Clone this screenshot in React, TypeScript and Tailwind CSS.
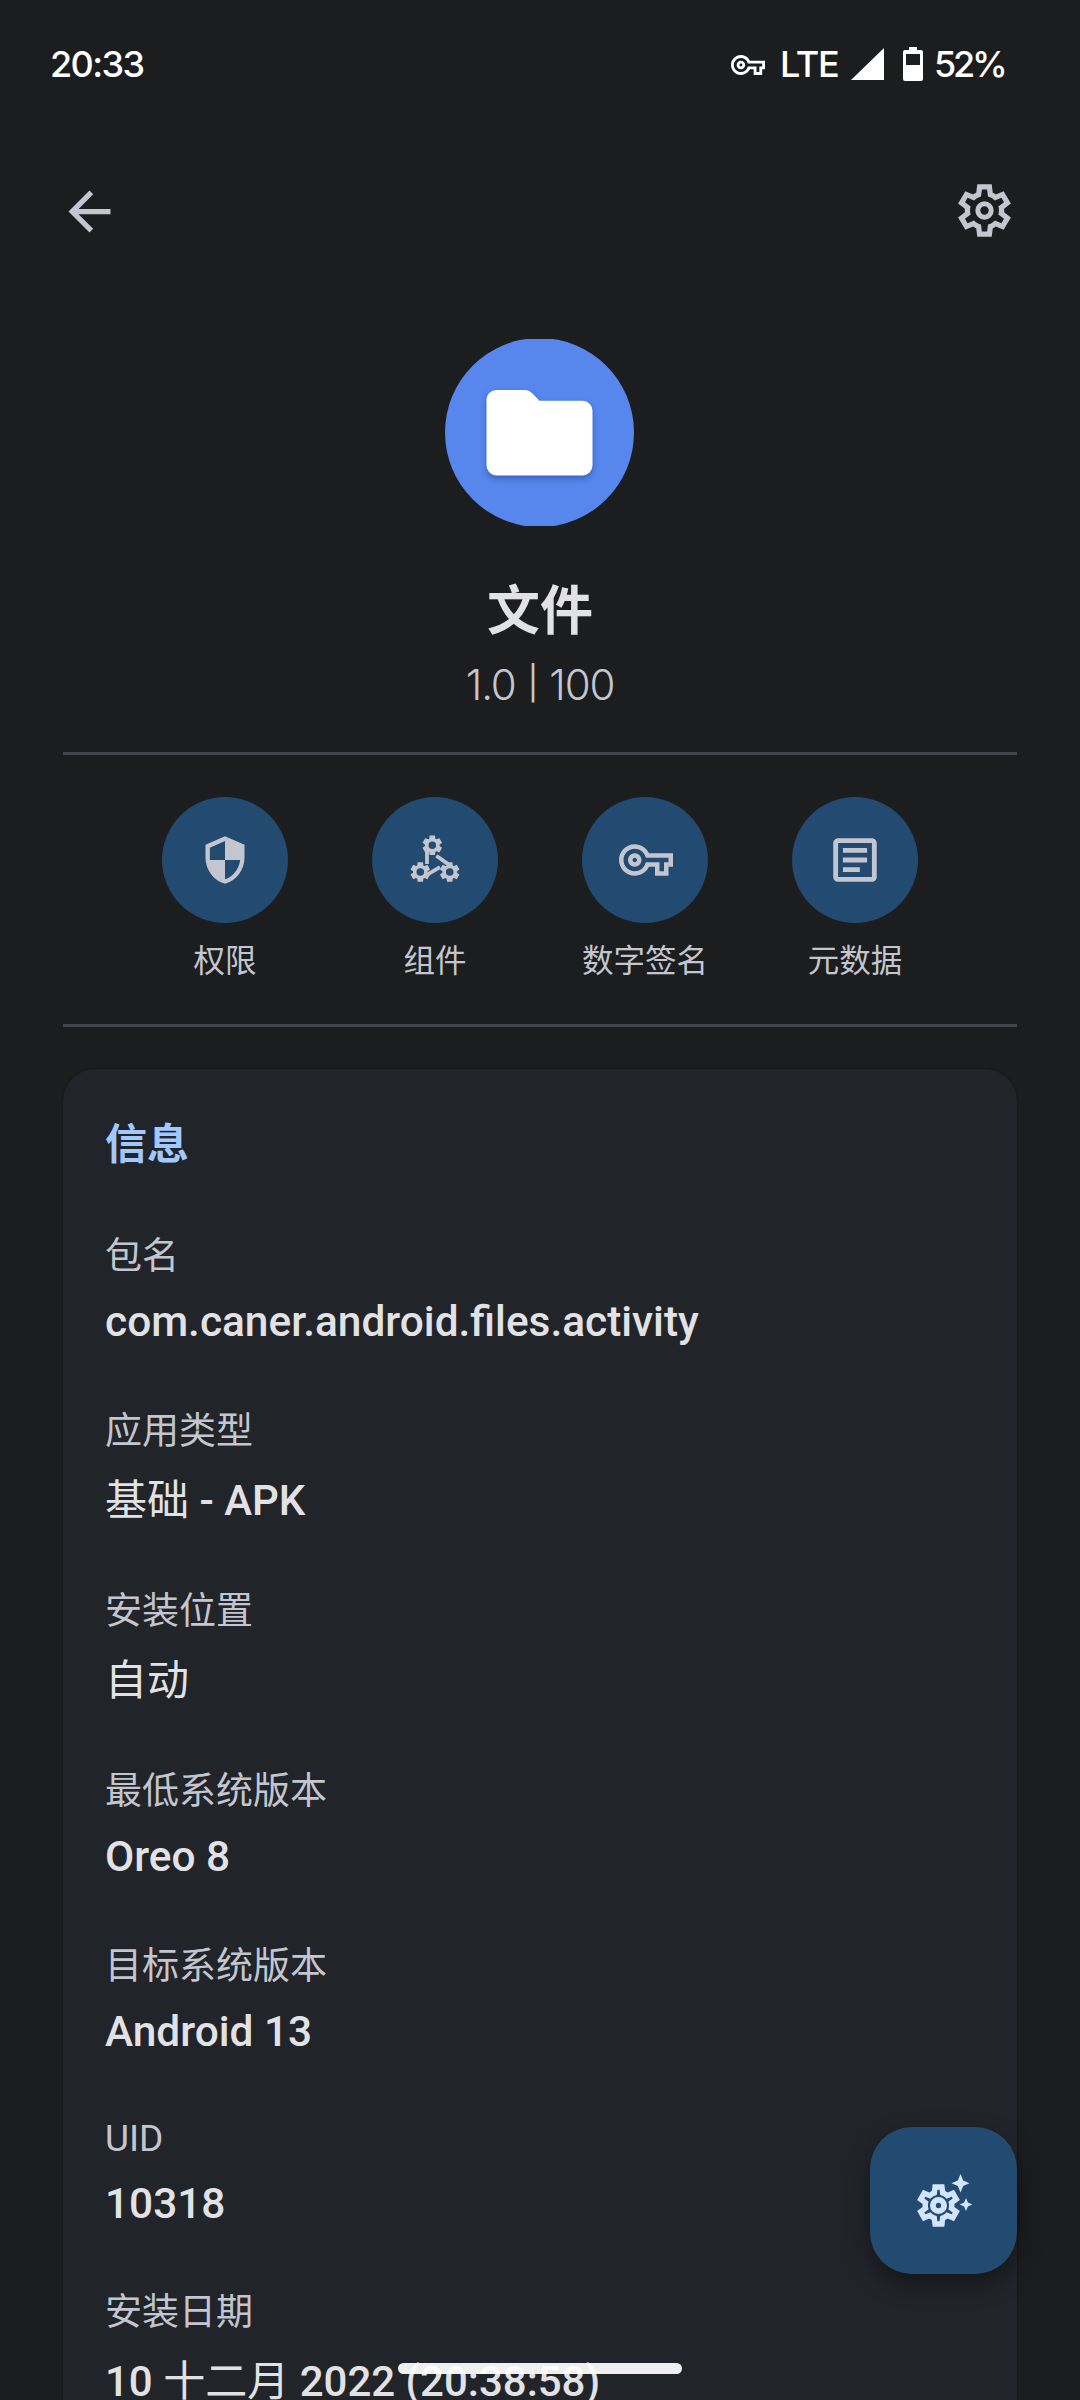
import React from "react";
import { MdArrowBack, MdOutlineArticle, MdOutlineVpnKey, MdSecurity } from "react-icons/md";

const GEAR =
  "m370-80-16-128q-13-5-24.5-12T307-235l-119 50L78-375l103-78q-1-7-1-13.5v-27q0-6.5 1-13.5L78-585l110-190 119 50q11-8 23-15t24-12l16-128h220l16 128q13 5 24.5 12t22.5 15l119-50 110 190-103 78q1 7 1 13.5v27q0 6.5-1 13.5l103 78-110 190-119-50q-11 8-23 15t-24 12L590-80H370Z";
const GEAR_INNER =
  "M440-160h79l14-106q31-8 57.5-23.5T639-327l99 41 39-68-86-65q5-14 7-29.5t2-31.5q0-16-2-31.5t-7-29.5l86-65-39-68-99 42q-22-23-48.5-38.5T533-694l-13-106h-79l-14 106q-31 8-57.5 23.5T321-633l-99-41-39 68 86 64q-5 15-7 30t-2 32q0 16 2 31t7 30l-86 65 39 68 99-42q22 23 48.5 38.5T427-266l13 106Z";

function GearIcon({ className, bold = false }: { className: string; bold?: boolean }) {
  return (
    <svg viewBox="0 -960 960 960" className={className} fill="currentColor">
      <path d={GEAR + GEAR_INNER} fillRule="evenodd" />
      {bold && <path d={GEAR_INNER} fill="none" stroke="currentColor" strokeWidth="44" />}
      <circle cx="480" cy="-480" r={bold ? 105 : 102} fill="none" stroke="currentColor" strokeWidth={bold ? 110 : 76} />
    </svg>
  );
}

function MiniGear({ x, y }: { x: number; y: number }) {
  return (
    <g transform={`translate(${x} ${y})`}>
      <g transform="scale(0.0243) translate(-480 480)">
        <path fillRule="evenodd" d={GEAR + "M480-635a155 155 0 1 0 0 310a155 155 0 1 0 0-310Z"} />
      </g>
    </g>
  );
}

function ComponentsIcon() {
  return (
    <svg viewBox="-30 -30 60 60" className="size-[60px]" fill="currentColor">
      <MiniGear x={-2.7} y={-14.7} />
      <MiniGear x={-14.7} y={12} />
      <MiniGear x={14.7} y={12} />
      <path d="M-8-9V4M1.3-4.200L13.500 4.400M-7 14.200L5 7.200" fill="none" stroke="currentColor" strokeWidth="3.8" />
    </svg>
  );
}

function AppLogo() {
  return (
    <svg viewBox="0 0 189 187" className="mr-px h-[187px] w-[189px]">
      <circle cx="94.5" cy="93.5" r="94.5" fill="#5787ec" />
      <path
        className="drop-shadow-[0_3px_3px_rgba(20,50,130,0.45)]"
        fill="#fff"
        d="M52 51H80q4 0 7 3L94.5 61.700H137.500a10 10 0 0 1 10 10V126.500a10 10 0 0 1-10 10H51.500a10 10 0 0 1-10-10V61a10 10 0 0 1 10.500-10Z"
      />
    </svg>
  );
}

function StatusBar() {
  return (
    <header className="flex h-[129px] items-center justify-between pl-[50px] pr-[75px] font-['Inter',sans-serif] text-[36px] font-medium text-white">
      <span className="-mt-[2px] tracking-[-1.6px]">20:33</span>
      <div className="flex items-center">
        <MdOutlineVpnKey className="mr-[15px] size-[34px]" />
        <span className="-mt-[2px] mr-[11px] w-[60px] tracking-[-1.2px]">LTE</span>
        <svg viewBox="0 0 33 34" className="-mt-px mr-[19px] h-[34px] w-[33px]" fill="currentColor">
          <path d="M33 1V33H0Z" />
        </svg>
        <svg viewBox="0 0 20 34" className="-mt-px mr-[11px] h-[34px] w-5" fill="currentColor">
          <path fillRule="evenodd" d="M6 0H14V3H18a2 2 0 0 1 2 2V32a2 2 0 0 1-2 2H2a2 2 0 0 1-2-2V5a2 2 0 0 1 2-2H6ZM3 7V18H17V7Z" />
        </svg>
        <span className="-mt-[2px] w-[71px] tracking-[-3.2px]">52%</span>
      </div>
    </header>
  );
}

const actions: { label: string; icon: React.ReactNode }[] = [
  { label: "权限", icon: <MdSecurity className="size-[52px]" /> },
  { label: "组件", icon: <ComponentsIcon /> },
  { label: "数字签名", icon: <MdOutlineVpnKey className="ml-px size-[54px]" /> },
  { label: "元数据", icon: <MdOutlineArticle className="size-[58px]" /> },
];

const info: { label: string; value: string; latin: boolean; height: string }[] = [
  { label: "包名", value: "com.caner.android.files.activity", latin: true, height: "h-[175px]" },
  { label: "应用类型", value: "基础 - APK", latin: false, height: "h-[180px]" },
  { label: "安装位置", value: "自动", latin: false, height: "h-[180px]" },
  { label: "最低系统版本", value: "Oreo 8", latin: true, height: "h-[175px]" },
  { label: "目标系统版本", value: "Android 13", latin: true, height: "h-[172px]" },
  { label: "UID", value: "10318", latin: true, height: "h-[174px]" },
  { label: "安装日期", value: "10 十二月 2022 (20:38:58)", latin: false, height: "h-[180px]" },
];

// Han characters stay at regular weight while Latin text is medium.
function Value({ text }: { text: string }) {
  return (
    <>
      {text.split(/([\u4e00-\u9fff]+)/).map((part, i) => (
        <span key={i} className={i % 2 ? "font-normal" : "font-medium"}>
          {part}
        </span>
      ))}
    </>
  );
}

export default function App() {
  return (
    <div className="relative h-[2400px] w-[1080px] overflow-hidden bg-[#1b1d1e] font-['Roboto','Noto_Sans_CJK_SC',sans-serif] text-[#c3c6cf]">
      <StatusBar />
      <nav className="flex h-[164px] items-center justify-between px-[58px]">
        <MdArrowBack className="size-[63px]" />
        <GearIcon className="-mt-px mr-[6px] size-[63px]" />
      </nav>

      <section className="flex h-[459px] flex-col items-center pt-[46px]">
        <AppLogo />
        <h1 className="mt-[48px] h-[75px] text-[53px] font-bold leading-[76px] text-[#e2e2e5]">文件</h1>
        <p className="flex h-[70px] items-center font-['Inter',sans-serif] text-[42px] font-light tracking-[-1.2px]">
          <span>1.0</span>
          <span className="mx-[12px] text-[33px] font-normal">|</span>
          <span>100</span>
        </p>
      </section>

      <div className="mx-[63px] flex h-[275px] justify-center gap-[84px] border-y-3 border-[#44464e] pt-[42px]">
        {actions.map((a) => (
          <div key={a.label} className="flex w-[126px] flex-col items-center">
            <div className="flex size-[126px] shrink-0 items-center justify-center rounded-full bg-[#234a70]">{a.icon}</div>
            <span className="mt-[16px] whitespace-nowrap text-[31.5px] leading-[46px]">{a.label}</span>
          </div>
        ))}
      </div>

      <main className="mx-[63px] mt-[42px] h-[1400px] rounded-t-[32px] bg-[#212429] px-[42px] pt-[44px] shadow-[0_0_3px_rgba(0,0,0,0.4)]">
        <h2 className="h-[117px] text-[42px] font-bold leading-[64px] text-[#a2c9ff]">信息</h2>
        <dl>
          {info.map((row) => (
            <div key={row.label} className={row.height}>
              <dt className="h-[54px] text-[37px] leading-[54px]">{row.label}</dt>
              <dd className={`${row.latin ? "h-[76px] text-[42.4px] leading-[76px]" : "h-[83px] text-[42px] leading-[83px]"} whitespace-nowrap text-[#e2e2e5]`}>
                <Value text={row.value} />
              </dd>
            </div>
          ))}
        </dl>
      </main>

      <button className="absolute left-[870px] top-[2127px] size-[147px] rounded-[42px] bg-[#234a70] text-[#d3e4ff] shadow-[0_10px_24px_rgba(0,0,0,0.4)]">
        <GearIcon bold className="absolute left-[43px] top-[53px] size-[51px]" />
        <svg viewBox="0 0 24 40" className="absolute left-[80px] top-[46px] h-10 w-6" fill="currentColor">
          <path d="M10.500 1L13.200 7.500L19.500 10.300L13.200 13L10.500 19.500L7.800 13L1.500 10.300L7.800 7.500Z" />
          <path d="M16 25L17.900 29.600L22.300 31.500L17.900 33.400L16 38L14.100 33.400L9.700 31.500L14.100 29.600Z" />
        </svg>
      </button>
      <div className="absolute left-[398px] top-[2363px] h-[11px] w-[284px] rounded-full bg-white/93" />
    </div>
  );
}
